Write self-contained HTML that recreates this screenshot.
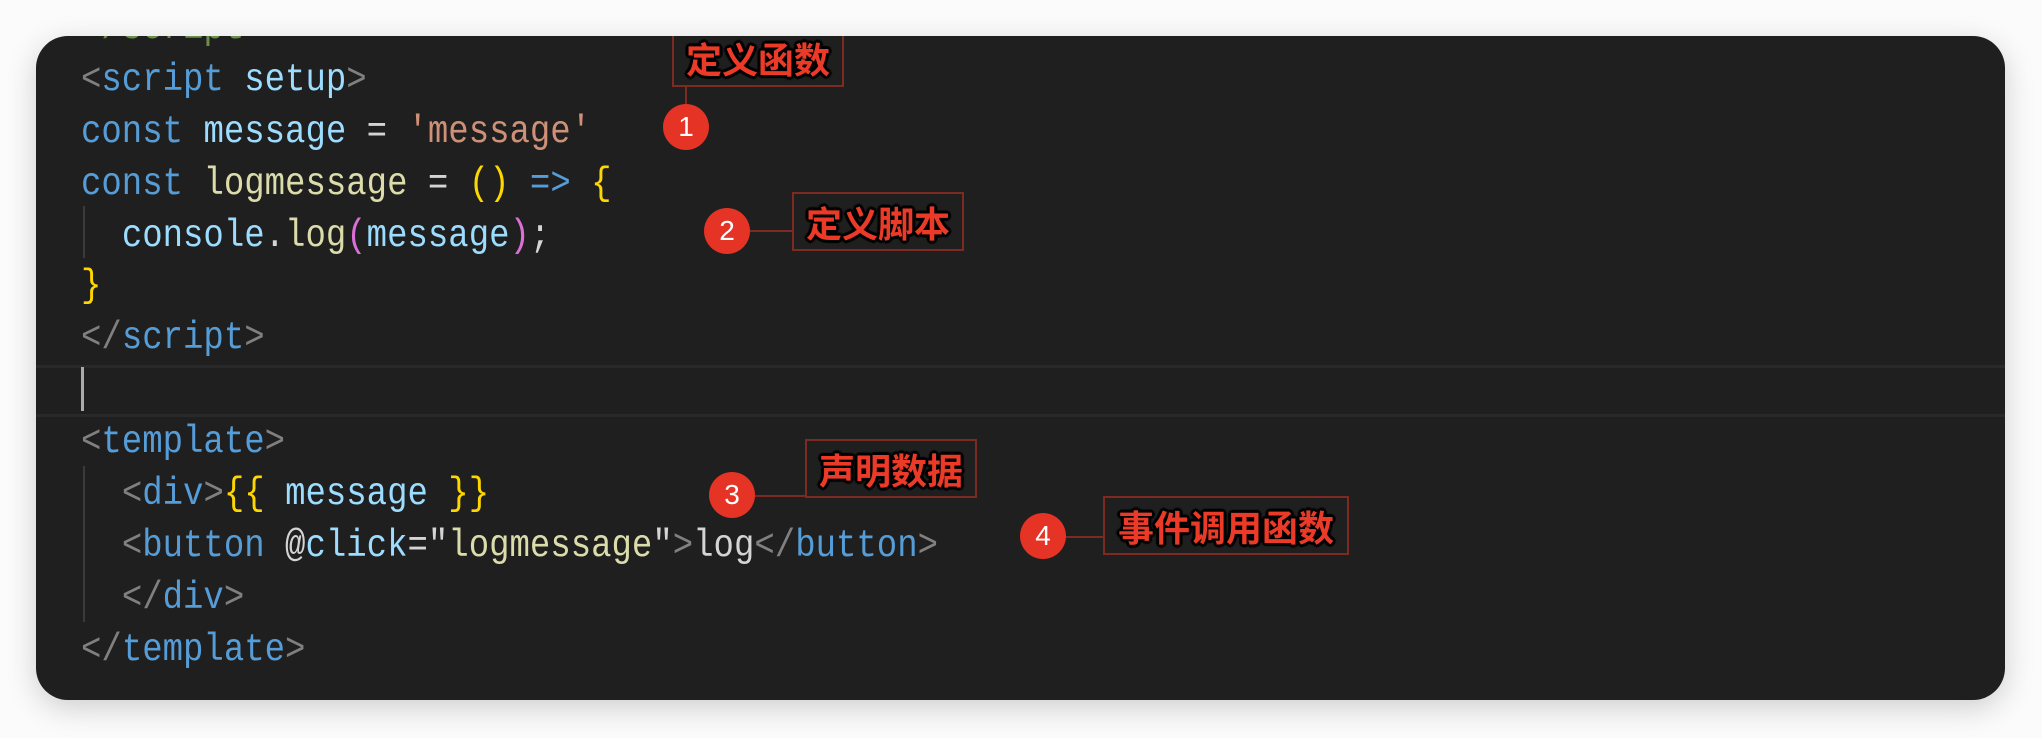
<!DOCTYPE html>
<html><head><meta charset="utf-8"><style>
html,body{margin:0;padding:0}
body{width:2042px;height:738px;background:#fbfbfb;position:relative;overflow:hidden}
.card{position:absolute;left:36px;top:36px;width:1969px;height:664px;background:#1f1f1f;border-radius:32px;overflow:hidden;box-shadow:0 8px 30px rgba(0,0,0,.18)}
.code{position:absolute;left:45px;top:3px;font-family:"Liberation Mono",monospace;font-size:34px;color:#d4d4d4;white-space:pre}
.l{position:absolute;left:0;height:52px;line-height:52px;transform:scaleY(1.15);transform-origin:left center}
.g{color:#808080}.t{color:#569cd6}.v{color:#9cdcfe}.s{color:#ce9178}.f{color:#dcdcaa}.y{color:#ffd700}.m{color:#da70d6}.w{color:#d4d4d4}.c{color:#6a8f4a}
.hl{position:absolute;left:0;right:0;top:329px;height:46px;background:#1f1f1f;border-top:3px solid #292929;border-bottom:3px solid #292929}
.cursor{position:absolute;left:45px;top:331px;width:3px;height:44px;background:#aaa}
.guide{position:absolute;width:2px;background:#3a3a3a;left:47px}
.ann{position:absolute;border:2px solid #7d2a22;box-sizing:border-box;font-family:"Noto Sans CJK SC","WenQuanYi Zen Hei",sans-serif;font-weight:bold;font-size:36px;color:#ec3a28;text-align:center;text-shadow:-2px -2px 1px #000,2px -2px 1px #000,-2px 2px 1px #000,2px 2px 1px #000,0 3px 1px #000,0 -3px 1px #000,3px 0 1px #000,-3px 0 1px #000}
.dot{position:absolute;width:46px;height:46px;border-radius:50%;background:#e53325;color:#fff;font-family:"Liberation Sans",sans-serif;font-size:28px;text-align:center;line-height:46px}
.ln{position:absolute;background:#7d2a22}
</style></head><body>
<div class="card">
<div class="hl"></div>
<div class="cursor"></div>
<div class="guide" style="top:170px;height:52px"></div>
<div class="guide" style="top:430px;height:156px"></div>
<div class="code">
<div class="l c" style="top:-36px">&lt;/script&gt;</div>
<div class="l" style="top:16px"><span class="g">&lt;</span><span class="t">script</span> <span class="v">setup</span><span class="g">&gt;</span></div>
<div class="l" style="top:68px"><span class="t">const</span> <span class="v">message</span> = <span class="s">'message'</span></div>
<div class="l" style="top:120px"><span class="t">const</span> <span class="f">logmessage</span> = <span class="y">()</span> <span class="t">=&gt;</span> <span class="y">{</span></div>
<div class="l" style="top:172px">  <span class="v">console</span>.<span class="f">log</span><span class="m">(</span><span class="v">message</span><span class="m">)</span>;</div>
<div class="l y" style="top:222px">}</div>
<div class="l" style="top:274px"><span class="g">&lt;/</span><span class="t">script</span><span class="g">&gt;</span></div>
<div class="l" style="top:378px"><span class="g">&lt;</span><span class="t">template</span><span class="g">&gt;</span></div>
<div class="l" style="top:430px">  <span class="g">&lt;</span><span class="t">div</span><span class="g">&gt;</span><span class="y">{{</span> <span class="v">message</span> <span class="y">}}</span></div>
<div class="l" style="top:482px">  <span class="g">&lt;</span><span class="t">button</span> <span class="w">@</span><span class="v">click</span>=<span class="w">"</span><span class="f">logmessage</span><span class="w">"</span><span class="g">&gt;</span>log<span class="g">&lt;/</span><span class="t">button</span><span class="g">&gt;</span></div>
<div class="l" style="top:534px">  <span class="g">&lt;/</span><span class="t">div</span><span class="g">&gt;</span></div>
<div class="l" style="top:586px"><span class="g">&lt;/</span><span class="t">template</span><span class="g">&gt;</span></div>
</div>
</div>
<div class="ann" style="left:672px;top:36px;width:172px;height:51px;line-height:44px;border-top:none">定义函数</div>
<div class="ln" style="left:685px;top:87px;width:2px;height:20px"></div>
<div class="dot" style="left:663px;top:104px">1</div>

<div class="ann" style="left:792px;top:192px;width:172px;height:59px;line-height:56px">定义脚本</div>
<div class="ln" style="left:750px;top:230px;width:42px;height:2px"></div>
<div class="dot" style="left:704px;top:208px">2</div>

<div class="ann" style="left:805px;top:439px;width:172px;height:59px;line-height:56px">声明数据</div>
<div class="ln" style="left:755px;top:495px;width:50px;height:2px"></div>
<div class="dot" style="left:709px;top:472px">3</div>

<div class="ann" style="left:1103px;top:496px;width:246px;height:59px;line-height:56px">事件调用函数</div>
<div class="ln" style="left:1066px;top:536px;width:37px;height:2px"></div>
<div class="dot" style="left:1020px;top:513px">4</div>
</body></html>
